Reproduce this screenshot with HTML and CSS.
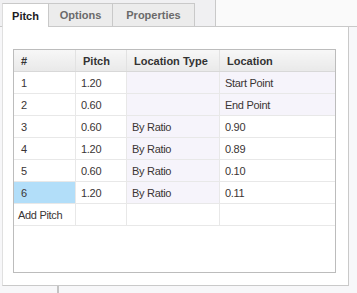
FILE: index.html
```html
<!DOCTYPE html>
<html lang="en">
<head>
    <meta charset="UTF-8">
    <meta name="viewport" content="width=device-width, initial-scale=1.0">
    <title>Pitch Editor</title>
    <link rel="stylesheet" href="styles.css">
</head>
<body>
    <div class="tabbar">
        <div class="tabs">
            <div class="tab tab-pitch active">Pitch</div>
            <div class="tab tab-options">Options</div>
            <div class="tab tab-props">Properties</div>
        </div>
        <div class="tabfill"></div>
    </div>
    <div class="panel">
        <div class="grid">
            <table>
                <tr>
                    <th class="col-num">#</th>
                    <th class="col-pitch">Pitch</th>
                    <th class="col-type">Location Type</th>
                    <th>Location</th>
                </tr>
                <tr>
                    <td class="num">1</td><td>1.20</td><td class="shade"></td><td class="shade">Start Point</td>
                </tr>
                <tr>
                    <td class="num">2</td><td>0.60</td><td class="shade"></td><td class="shade">End Point</td>
                </tr>
                <tr>
                    <td class="num">3</td><td>0.60</td><td class="shade">By Ratio</td><td>0.90</td>
                </tr>
                <tr>
                    <td class="num">4</td><td>1.20</td><td class="shade">By Ratio</td><td>0.89</td>
                </tr>
                <tr>
                    <td class="num">5</td><td>0.60</td><td class="shade">By Ratio</td><td>0.10</td>
                </tr>
                <tr>
                    <td class="num selected">6</td><td>1.20</td><td class="shade">By Ratio</td><td>0.11</td>
                </tr>
                <tr>
                    <td class="add">Add Pitch</td><td></td><td></td><td></td>
                </tr>
            </table>
        </div>
    </div>
    <div class="foot">
        <div class="splitter"></div>
    </div>
</body>
</html>
```

FILE: styles.css
```css
body {
    margin: 0;
    width: 357px;
    height: 293px;
    overflow: hidden;
    background: #f7f7f9;
    font-family: "Liberation Sans", Arial, sans-serif;
    font-size: 11px;
    color: #333;
}
.tabbar {
    display: flex;
    height: 27px;
}
.tabs {
    box-sizing: border-box;
    width: 215px;
    display: flex;
    align-items: flex-end;
    padding: 3px 0 0 2px;
    background: #f0f0f2;
    border-bottom: 1px solid #c9c9c9;
}
.tab {
    box-sizing: border-box;
    height: 23px;
    display: flex;
    align-items: center;
    justify-content: center;
    font-weight: bold;
    color: #6a6a6a;
    background: #ececec;
    border: 1px solid #c9c9c9;
    border-bottom: none;
    border-left: none;
}
.tab-pitch {
    width: 47px;
    border-left: 1px solid #dcdcdc;
}
.tab-options {
    width: 64px;
}
.tab-props {
    width: 82px;
}
.tab.active {
    height: 24px;
    margin-bottom: -1px;
    background: #fff;
    color: #1c1c24;
}
.tabfill {
    flex: 1;
    background: #fafafa;
    border-left: 1px solid #c9c9c9;
    border-bottom: 1px solid #c9c9c9;
}
.panel {
    box-sizing: border-box;
    width: 347px;
    height: 259px;
    margin-left: 2px;
    padding: 22px 12px 12px 10px;
    background: #fff;
    border: 1px solid #c9c9c9;
    border-top: none;
    border-left-color: #e0e0e0;
}
.grid {
    box-sizing: border-box;
    height: 224px;
    border: 1px solid #bcbcbc;
    background: #fff;
}
table {
    width: 100%;
    border-collapse: collapse;
    table-layout: fixed;
}
th {
    height: 21px;
    padding: 0 7px;
    text-align: left;
    font-weight: bold;
    color: #333;
    background: linear-gradient(#f7f7f7, #e9e9e9);
    border-left: 1px solid #e2e2e2;
    border-bottom: 1px solid #d8d8d8;
}
th:first-child,
td:first-child {
    border-left: none;
}
.col-num {
    width: 47px;
}
.col-pitch {
    width: 36px;
}
.col-type {
    width: 78px;
}
td {
    height: 21px;
    padding: 0 5px;
    letter-spacing: -0.3px;
    color: #3a3434;
    border-left: 1px solid #e8e8e8;
    border-bottom: 1px solid #e8e8e8;
}
td.num {
    padding-left: 7px;
}
td.add {
    padding-left: 4px;
}
td.shade {
    background: #f6f4fb;
}
td.selected {
    background: #b2def9;
}
.foot {
    height: 8px;
}
.splitter {
    width: 2px;
    height: 8px;
    margin-left: 57px;
    background: #c4c4c4;
}
```
